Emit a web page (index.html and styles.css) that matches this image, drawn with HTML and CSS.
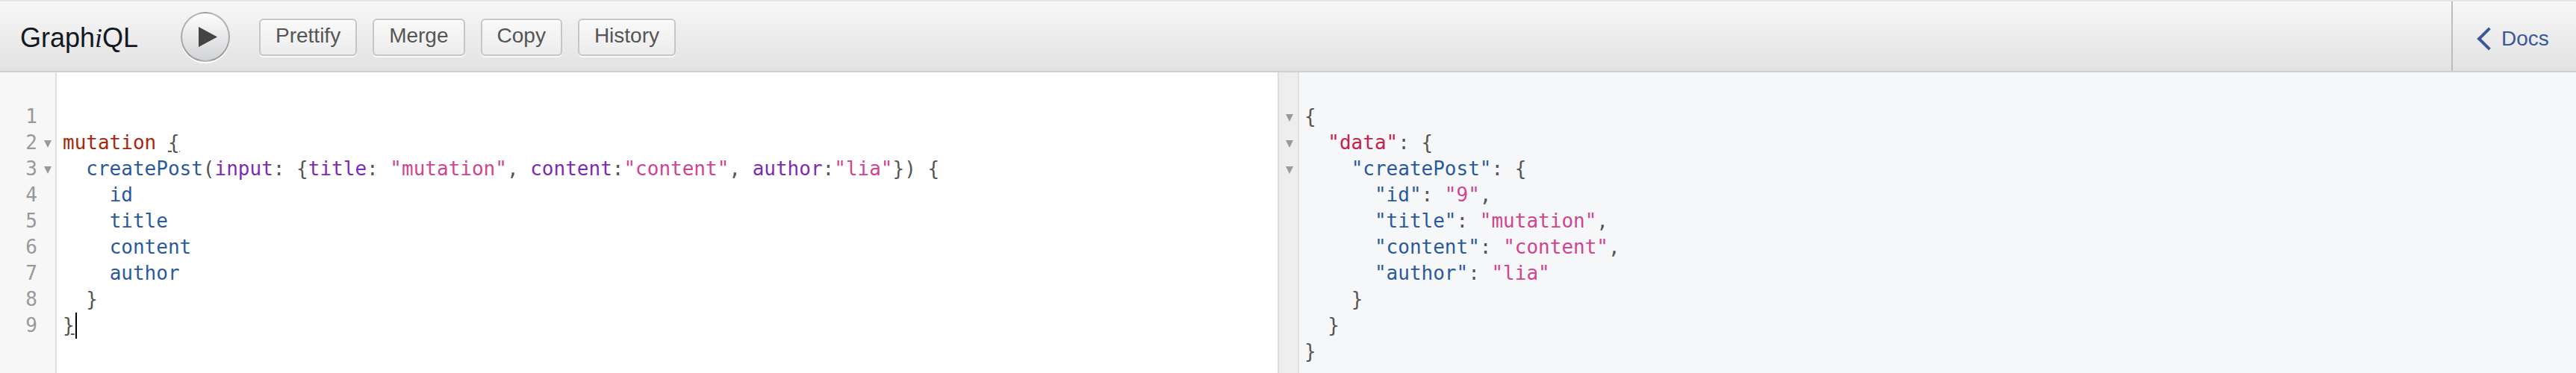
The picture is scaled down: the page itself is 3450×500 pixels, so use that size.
FILE: index.html
```html
<!DOCTYPE html>
<html lang="en">
<head>
<meta charset="utf-8">
<title>GraphiQL</title>
<link rel="stylesheet" href="styles.css">
</head>
<body>
<div class="app">
  <header class="topbar">
    <div class="title">Graph<em>i</em>QL</div>
    <button class="run" type="button" aria-label="Execute query">
      <svg class="run-icon" width="25" height="27" viewBox="0 0 25 27"><path d="M0 0L25 13.5L0 27Z"/></svg>
    </button>
    <div class="tools">
      <button class="tool" type="button">Prettify</button>
      <button class="tool" type="button">Merge</button>
      <button class="tool" type="button">Copy</button>
      <button class="tool" type="button">History</button>
    </div>
    <button class="docs" type="button"><span class="chevron"></span>Docs</button>
  </header>
  <main class="panes">
    <section class="editor">
      <div class="gutter">
        <div class="ln"><span class="num">1</span><span class="fold"></span></div>
        <div class="ln"><span class="num">2</span><span class="fold open"></span></div>
        <div class="ln"><span class="num">3</span><span class="fold open"></span></div>
        <div class="ln"><span class="num">4</span><span class="fold"></span></div>
        <div class="ln"><span class="num">5</span><span class="fold"></span></div>
        <div class="ln"><span class="num">6</span><span class="fold"></span></div>
        <div class="ln"><span class="num">7</span><span class="fold"></span></div>
        <div class="ln"><span class="num">8</span><span class="fold"></span></div>
        <div class="ln"><span class="num">9</span><span class="fold"></span></div>
      </div>
      <pre class="code"><code class="line"> </code>
<code class="line"><span class="kw">mutation</span> <span class="match">{</span></code>
<code class="line">  <span class="prop">createPost</span><span class="p">(</span><span class="attr">input</span><span class="p">:</span> <span class="p">{</span><span class="attr">title</span><span class="p">:</span> <span class="str">"mutation"</span><span class="p">,</span> <span class="attr">content</span><span class="p">:</span><span class="str">"content"</span><span class="p">,</span> <span class="attr">author</span><span class="p">:</span><span class="str">"lia"</span><span class="p">})</span> <span class="p">{</span></code>
<code class="line">    <span class="prop">id</span></code>
<code class="line">    <span class="prop">title</span></code>
<code class="line">    <span class="prop">content</span></code>
<code class="line">    <span class="prop">author</span></code>
<code class="line">  <span class="p">}</span></code>
<code class="line"><span class="match">}</span><span class="cursor"></span></code></pre>
    </section>
    <section class="result">
      <div class="result-gutter">
        <div class="ln"><span class="fold open"></span></div>
        <div class="ln"><span class="fold open"></span></div>
        <div class="ln"><span class="fold open"></span></div>
      </div>
      <pre class="code result-code"><code class="line"><span class="p">{</span></code>
<code class="line">  <span class="def">"data"</span><span class="p">:</span> <span class="p">{</span></code>
<code class="line">    <span class="prop">"createPost"</span><span class="p">:</span> <span class="p">{</span></code>
<code class="line">      <span class="prop">"id"</span><span class="p">:</span> <span class="str">"9"</span><span class="p">,</span></code>
<code class="line">      <span class="prop">"title"</span><span class="p">:</span> <span class="str">"mutation"</span><span class="p">,</span></code>
<code class="line">      <span class="prop">"content"</span><span class="p">:</span> <span class="str">"content"</span><span class="p">,</span></code>
<code class="line">      <span class="prop">"author"</span><span class="p">:</span> <span class="str">"lia"</span></code>
<code class="line">    <span class="p">}</span></code>
<code class="line">  <span class="p">}</span></code>
<code class="line"><span class="p">}</span></code></pre>
    </section>
  </main>
</div>
</body>
</html>
```
FILE: styles.css
```css
* { box-sizing: border-box; }
html, body { margin: 0; height: 100%; overflow: hidden; background: #fff; }
body { font-family: "Liberation Sans", Arial, sans-serif; }

.app { height: 500px; display: flex; flex-direction: column; padding-top: 2px; background: #e5e5e5; }

.topbar {
  height: 95px;
  flex: none;
  display: flex;
  align-items: center;
  background: linear-gradient(#f7f7f7, #e2e2e2);
  border-bottom: 2px solid #d0d0d0;
}
.title { margin: 5px 0 0 27px; width: 215px; font-size: 36px; color: #141823; }
.title em { font-family: "Liberation Serif", serif; font-style: italic; }

.run {
  width: 66px; height: 67px;
  margin-top: 1px;
  padding: 0 0 0 6px;
  display: flex; align-items: center; justify-content: center;
  border-radius: 50%;
  border: 2px solid rgba(0,0,0,.27);
  background: linear-gradient(#fdfdfd, #d2d3d6);
  box-shadow: 0 2px 0 #fff;
}
.run-icon { fill: #444; display: block; }

.tools { display: flex; gap: 21px; margin: 3px 0 0 39px; }
.tool {
  height: 50px;
  padding: 0 20px 4px;
  font: 28px "Liberation Sans", Arial, sans-serif;
  color: #555;
  background: linear-gradient(#f9f9f9, #ececec);
  border: 2px solid #c6c6c6;
  border-radius: 6px;
  box-shadow: 0 2px 0 rgba(255,255,255,.7), inset 0 2px #fff;
}

.docs {
  margin-left: auto;
  height: 100%;
  width: 167px;
  padding: 6px 0 0 40px;
  display: flex; align-items: center; gap: 6px;
  font: 28px "Liberation Sans", Arial, sans-serif;
  color: #3b5998;
  background: linear-gradient(#f7f7f7, #e2e2e2);
  border: 0;
  border-left: 2px solid #bdbdbd;
}
.chevron {
  width: 22px; height: 22px;
  border-left: 4px solid #3b5998;
  border-top: 4px solid #3b5998;
  transform: rotate(-45deg);
  margin-left: -3px;
}

.panes { flex: 1; display: flex; min-height: 0; background: #fff; }
.editor { width: 1711px; display: flex; background: #fff; }
.gutter {
  width: 76px;
  flex: none;
  padding-top: 42px;
  background: #f7f7f7;
  border-right: 2px solid #e0e0e0;
}
.ln { height: 35px; display: flex; align-items: center; }
.num {
  width: 52px;
  padding-right: 2px;
  text-align: right;
  color: #999;
  font: 26px/35px "DejaVu Sans Mono", monospace;
}
.fold { width: 10px; margin-left: 7px; }
.fold.open {
  height: 10px;
  flex: none;
  margin-top: 3px;
  background: #999;
  clip-path: polygon(0 0, 100% 0, 50% 100%);
}

.code {
  margin: 0;
  padding: 42px 0 0 8px;
  font: 26px/35px "DejaVu Sans Mono", monospace;
  color: #141823;
}
.line { display: inline-block; height: 35px; font: inherit; }
.kw { color: #a9270f; }
.prop { color: #2a5a9c; }
.attr { color: #7d2bb3; }
.str { color: #cf4590; }
.def { color: #c4214f; }
.p { color: #555; }
.match { color: #555; text-decoration: underline; }
.cursor {
  display: inline-block;
  width: 2px; height: 35px;
  margin-left: 1px;
  background: #000;
  vertical-align: top;
}

.result { flex: 1; display: flex; background: #f6f7f8; border-left: 2px solid #ddd; }
.result-gutter {
  width: 27px;
  flex: none;
  padding-top: 42px;
  background: #eee;
  border-right: 2px solid #e0e0e0;
}
.result-gutter .fold { margin-left: 9px; }
.result-code { padding-left: 7px; }
```
